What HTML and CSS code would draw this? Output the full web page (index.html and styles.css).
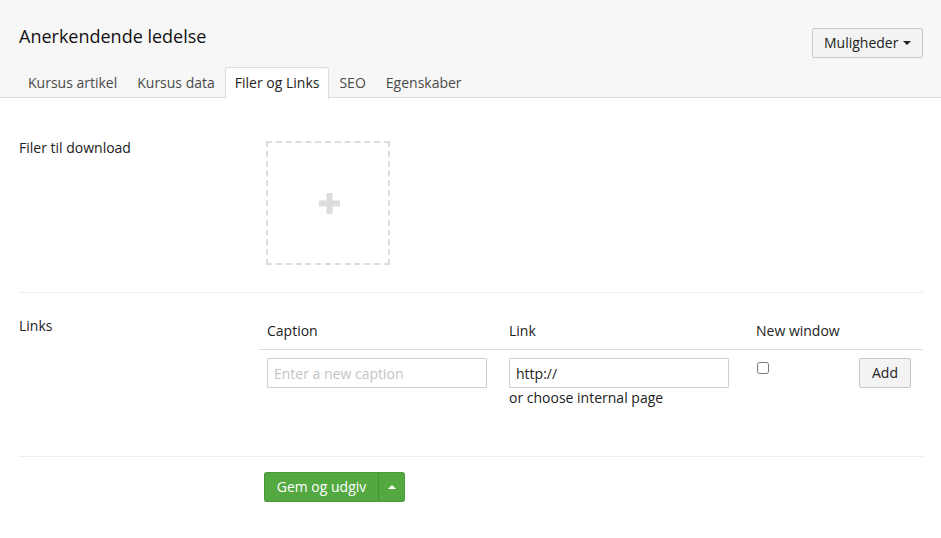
FILE: index.html
```html
<!DOCTYPE html>
<html lang="da">
<head>
<meta charset="utf-8">
<title>Anerkendende ledelse</title>
<link rel="stylesheet" href="styles.css">
</head>
<body>
<header class="header">
  <div class="title-row">
    <h1 class="title">Anerkendende ledelse</h1>
    <button class="btn btn-options">Muligheder <span class="caret-down"></span></button>
  </div>
  <ul class="tabs">
    <li class="tab">Kursus artikel</li>
    <li class="tab">Kursus data</li>
    <li class="tab active">Filer og Links</li>
    <li class="tab">SEO</li>
    <li class="tab">Egenskaber</li>
  </ul>
</header>
<main class="content">
  <section class="prop prop-files">
    <div class="prop-label">Filer til download</div>
    <div class="prop-control">
      <div class="dropzone">
        <svg class="plus" width="21" height="21" viewBox="0 0 21 21"><path d="M7.5 0h6v7.5h7.5v6h-7.5v7.5h-6v-7.5h-7.5v-6h7.5z" fill="#dcdcdc"/></svg>
      </div>
    </div>
  </section>
  <section class="prop prop-links">
    <div class="prop-label">Links</div>
    <div class="prop-control">
      <table class="links-table">
        <colgroup>
          <col class="c1"><col class="c2"><col class="c3"><col class="c4">
        </colgroup>
        <thead>
          <tr><th>Caption</th><th>Link</th><th>New window</th><th></th></tr>
        </thead>
        <tbody>
          <tr>
            <td><input class="input" type="text" placeholder="Enter a new caption"></td>
            <td><input class="input" type="text" value="http://"><div class="internal">or choose internal page</div></td>
            <td><input class="check" type="checkbox"></td>
            <td><button class="btn btn-add">Add</button></td>
          </tr>
        </tbody>
      </table>
    </div>
  </section>
  <section class="save-row">
    <div class="btn-group">
      <button class="btn-success btn-main">Gem og udgiv</button><button class="btn-success btn-toggle"><span class="caret-up"></span></button>
    </div>
  </section>
</main>
</body>
</html>
```
FILE: styles.css
```css
* { box-sizing: border-box; }
body {
  margin: 0;
  font-family: "Open Sans", "Helvetica Neue", Arial, sans-serif;
  font-size: 14px;
  line-height: 20px;
  color: #222;
  background: #fff;
}
.header {
  background: #f7f7f7;
  border-bottom: 1px solid #dcdcdc;
  padding: 24px 18px 0 19px;
  height: 98px;
}
.title-row {
  display: flex;
  justify-content: space-between;
  align-items: flex-start;
}
.title {
  margin: 0;
  font-size: 18px;
  line-height: 24px;
  font-weight: 400;
  color: #111;
}
.btn {
  font-family: inherit;
  font-size: 14px;
  color: #222;
  background: #f3f3f3;
  border: 1px solid #c8c8c8;
  border-radius: 2px;
  padding: 0 12px;
  height: 30px;
  line-height: 28px;
}
.btn-options {
  margin-top: 4px;
  width: 111px;
  padding: 0;
}
.caret-down {
  display: inline-block;
  width: 0;
  height: 0;
  border-left: 4px solid transparent;
  border-right: 4px solid transparent;
  border-top: 4px solid #222;
  vertical-align: middle;
  margin-left: 1px;
  margin-top: -2px;
}
.tabs {
  list-style: none;
  margin: 9px 0 0 -1px;
  padding: 0;
  display: flex;
}
.tab {
  padding: 5px 9px 5px;
  border: 1px solid transparent;
  border-bottom: 0;
  border-radius: 3px 3px 0 0;
  color: #4a4a4a;
  height: 31px;
}
.tab.active {
  background: #fff;
  border-color: #dcdcdc;
  color: #222;
  height: 32px;
}
.content {
  padding: 0 18px 0 19px;
}
.prop {
  display: grid;
  grid-template-columns: 240px 1fr;
  border-bottom: 1px solid #eee;
}
.prop-label {
  line-height: 20px;
  padding-top: 2px;
}
.prop-files {
  padding: 38px 0 27px;
}
.dropzone {
  margin: 5px 0 0 7px;
  width: 124px;
  height: 124px;
  border: 2px dashed #dcdcdc;
  display: flex;
  align-items: center;
  justify-content: center;
}
.plus { display: block; margin-left: 2px; }
.prop-links {
  padding: 21px 0 40px;
}
.links-table {
  border-collapse: collapse;
  width: 664px;
  margin-top: 4px;
  table-layout: fixed;
}
.c1 { width: 242px; }
.c2 { width: 247px; }
.c3 { width: 103px; }
.c4 { width: 72px; }
.links-table th {
  font-weight: 400;
  text-align: left;
  padding: 3px 8px 8px;
  border-bottom: 1px solid #ddd;
  white-space: nowrap;
}
.links-table td {
  padding: 8px;
  vertical-align: top;
}
.input {
  display: block;
  width: 220px;
  height: 30px;
  font-family: inherit;
  font-size: 14px;
  color: #222;
  border: 1px solid #cfcfcf;
  border-radius: 1px;
  padding: 4px 6px;
  outline: none;
}
.input::placeholder { color: #c4c4c4; }
.internal { line-height: 20px; }
.check {
  margin: 4px 0 0 1px;
  width: 12px;
  height: 12px;
}
.btn-add {
  width: 52px;
  padding: 0;
}
.save-row {
  padding: 15px 0 0 245px;
}
.btn-group { display: flex; }
.btn-success {
  font-family: inherit;
  font-size: 14px;
  color: #fff;
  background: #53a93f;
  border: 1px solid #48993a;
  height: 30px;
  line-height: 28px;
  padding: 0;
}
.btn-main {
  width: 115px;
  border-radius: 3px 0 0 3px;
  border-right: 1px solid #43902f;
}
.btn-toggle {
  width: 26px;
  border-left: 0;
  border-radius: 0 3px 3px 0;
  display: flex;
  align-items: center;
  justify-content: center;
}
.caret-up {
  display: block;
  width: 0;
  height: 0;
  border-left: 4px solid transparent;
  border-right: 4px solid transparent;
  border-bottom: 4px solid #fff;
}
```
